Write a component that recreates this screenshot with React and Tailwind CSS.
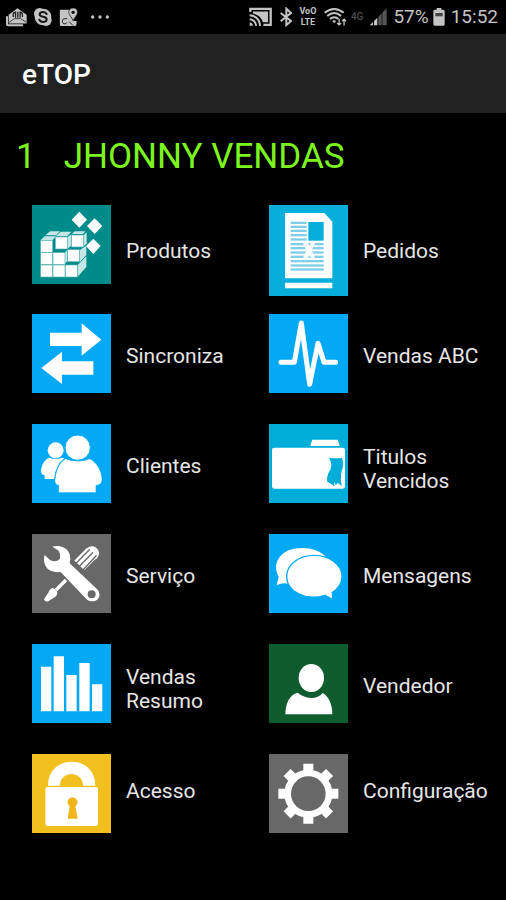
import React from "react";

function Tile({ color, children }) {
  return (
    <svg viewBox="0 0 237 237" className={"block size-[79px] shrink-0 " + color} fill="#fff" aria-hidden="true">
      {children}
    </svg>
  );
}

function ProductsIcon() {
  const faces = [
    [26, 106], [26, 143], [26, 180], [63, 143], [63, 180], [100, 180],
    [70, 96], [107, 134], [119, 90],
  ];
  return (
    <Tile color="bg-[#008b8b]">
      <path d="M142 20l23 24-23 24-23-24zM188 40l23 23-23 24-23-24zM184 101l22 22-22 24-22-24z" />
      <g fill="#c5e7e8">
        <path d="M26 105L38 94H72L62 105zM40 91L54 79H84L72 91zM71 94L86 80H118L106 94zM120 87L128 79H160L153 87z" />
        <path d="M106 97L118 88V122L106 131zM98 144L106 134V168L98 178zM155 91L164 82V116L155 124zM144 135L163 122V150L144 170zM137 180L163 154V186L137 215z" />
      </g>
      {faces.map(([x, y]) => (
        <rect key={x + "-" + y} x={x} y={y} width="36" height="36" stroke="#5cb4b4" strokeWidth="2" />
      ))}
    </Tile>
  );
}

function OrdersIcon() {
  const rows = [50, 62, 74, 87, 100, 114, 126, 139, 152, 165, 178, 190];
  return (
    <svg viewBox="0 0 237 273" className="block h-[91px] w-[79px] shrink-0 bg-[#08aedb]" fill="#fff" aria-hidden="true">
      <path d="M48 24H166L190 50V220H48zM48 233H190V250H48z" />
      {rows.map((y, i) => (
        <rect key={y} x="65" y={y} width={i < 5 ? 48 : 99} height="7" fill="#7fd0e6" />
      ))}
      <rect x="118" y="51" width="46" height="56" fill="#08aedb" />
      <path d="M101 112H116L121 124 127 112H139L128 136 139 162H127L121 149 115 162H101L112 136z" />
    </svg>
  );
}

function SyncIcon() {
  return (
    <Tile color="bg-[#03a9f4]">
      <path d="M54 56H149V28L208 77 149 125V96H54zM28 162L90 113V142H184V182H90V210z" />
    </Tile>
  );
}

function PulseIcon() {
  return (
    <Tile color="bg-[#03a9f4]">
      <path d="M36 145H76L97 27 122 211 147 88 165 145H200" fill="none" stroke="#fff" strokeWidth="15" strokeLinecap="round" strokeLinejoin="round" />
    </Tile>
  );
}

function ClientsIcon() {
  return (
    <Tile color="bg-[#03a9f4]">
      <circle cx="71" cy="79" r="24" />
      <path d="M51 101Q71 108 90 101L97 103Q72 120 66 165H38V154C26 150 26 143 28 132 32 116 40 106 51 101z" />
      <path d="M100 104Q118 111 137 111T174 104C196 116 208 140 210 162 211 178 205 183 192 184V206H80V184C68 182 67 172 70 158 74 132 84 114 100 104z" stroke="#03a9f4" strokeWidth="2" />
      <circle cx="137" cy="71" r="38" stroke="#03a9f4" strokeWidth="3" />
    </Tile>
  );
}

function FolderIcon() {
  return (
    <Tile color="bg-[#00acd8]">
      <path d="M130 47H206Q210 56 212 66H124Q126 56 130 47z" />
      <rect x="9" y="71" width="219" height="123" rx="7" />
      <path d="M180 101Q198 104 218 102 224 110 222 127 218 140 216 152 214 168 218 187L206 176 201 184 194 172 197 187Q185 178 175 174 172 162 178 148 187 136 187 123 186 110 180 101z" fill="#00acd8" />
    </Tile>
  );
}

function ServiceIcon() {
  return (
    <Tile color="bg-[#686868]">
      <path d="M142 94L180 56" stroke="#fff" strokeWidth="42" />
      <circle cx="180" cy="58" r="21" />
      <path d="M133 87L172 47M142 97L182 56M153 108L192 66" fill="none" stroke="#686868" strokeWidth="4" strokeLinecap="round" />
      <path d="M102 138L72 168" stroke="#fff" strokeWidth="10" />
      <path d="M62 162Q70 164 76 174 76 187 64 192L49 202Q39 205 36 196L49 176Q54 164 62 162z" />
      <path d="M61 38C79 33 106 39 113 61Q117 76 113 88L197 167C214 191 188 212 165 197L86 114C66 116 39 112 36 79Q35 70 38 63L54 78Q71 87 84 74 86 57 78 49z" />
      <circle cx="179" cy="181" r="12" fill="#686868" />
    </Tile>
  );
}

function MessagesIcon() {
  return (
    <Tile color="bg-[#03a9f4]">
      <path d="M23 154L29 128C12 100 22 65 59 49 100 34 151 43 172 70L60 150Q42 144 23 154z" />
      <path d="M135 64C181 64 219 92 219 127 219 147 208 164 190 176L191 197 168 184C110 202 53 174 53 127 53 92 90 64 135 64z" stroke="#03a9f4" strokeWidth="4" />
    </Tile>
  );
}

function BarsIcon() {
  return (
    <Tile color="bg-[#03a9f4]">
      <path d="M27 68H58V202H27zM65 37H96V202H65zM103 93H134V202H103zM142 57H173V202H142zM180 121H211V202H180z" />
    </Tile>
  );
}

function SellerIcon() {
  return (
    <Tile color="bg-[#0f5c2e]">
      <ellipse cx="127" cy="102" rx="38" ry="42" />
      <path d="M49 211C50 176 62 152 86 146Q103 161 131 162 150 160 161 147C180 158 190 182 190 211z" />
    </Tile>
  );
}

function LockIcon() {
  return (
    <Tile color="bg-[#f1c01e]">
      <path d="M48 95V92C50 0 188 0 190 92V95H153C153 48 84 48 84 95z" />
      <rect x="40" y="99" width="158" height="117" rx="7" />
      <path d="M113 157A15 15 0 1 1 130 157L137 194H107z" fill="#efb51a" />
    </Tile>
  );
}

function GearIcon() {
  const angles = [0, 45, 90, 135];
  return (
    <Tile color="bg-[#686868]">
      <circle cx="118" cy="119" r="62" fill="none" stroke="#fff" strokeWidth="20" />
      {angles.map((a) => (
        <path key={a} d="M103 29H133V54H103zM103 184H133V209H103z" transform={`rotate(${a} 118 119)`} />
      ))}
    </Tile>
  );
}

const entries = [
  { label: "Produtos", Icon: ProductsIcon, pad: "pt-[34px]" },
  { label: "Pedidos", Icon: OrdersIcon, pad: "pt-[34px]" },
  { label: "Sincroniza", Icon: SyncIcon, pad: "pt-[30px]" },
  { label: "Vendas ABC", Icon: PulseIcon, pad: "pt-[30px]" },
  { label: "Clientes", Icon: ClientsIcon, pad: "pt-[30px]" },
  { label: "Titulos Vencidos", Icon: FolderIcon, pad: "pt-[21px]" },
  { label: "Serviço", Icon: ServiceIcon, pad: "pt-[30px]" },
  { label: "Mensagens", Icon: MessagesIcon, pad: "pt-[30px]" },
  { label: "Vendas Resumo", Icon: BarsIcon, pad: "pt-[21px]" },
  { label: "Vendedor", Icon: SellerIcon, pad: "pt-[30px]" },
  { label: "Acesso", Icon: LockIcon, pad: "pt-[25px]" },
  { label: "Configuração", Icon: GearIcon, pad: "pt-[25px]" },
];

function StatusBar() {
  return (
    <div className="flex h-[34px] items-center justify-between pr-2 pl-[6px] text-[#c4c4c4]">
      <div className="flex items-center gap-[6px]">
        <svg viewBox="0 0 64 60" className="h-5 w-[21px]" fill="currentColor" aria-hidden="true">
          <path d="M0 28H6V52H52V58H6Q0 58 0 52z" />
          <path d="M8 23L35 3 63 23V50H8z" />
          <path d="M22 30V22Q22 15 29 15V32M36 14V32M43 32V15Q50 15 50 22V30" stroke="#222" strokeWidth="4" fill="none" />
          <path d="M9 46L26 35H45L62 46" stroke="#444" strokeWidth="3" fill="none" />
        </svg>
        <svg viewBox="0 0 60 60" className="size-5" fill="currentColor" aria-hidden="true">
          <circle cx="20" cy="20" r="17" />
          <circle cx="39" cy="40" r="17" />
          <circle cx="30" cy="30" r="25" />
          <path d="M41 21C36 11 19 14 20 23 21 32 41 27 41 37 41 47 23 48 19 38" fill="none" stroke="#151515" strokeWidth="6" strokeLinecap="round" />
        </svg>
        <svg viewBox="0 0 56 60" className="h-5 w-[19px]" fill="currentColor" aria-hidden="true">
          <path d="M4 8H30L36 32 46 42H52V52Q52 57 47 57H5Q2 57 2 52V12Q2 8 4 8z" />
          <path d="M42 3C33 3 28 9 29 17 30 26 39 31 42 42 45 31 54 26 55 17 56 9 51 3 42 3z" stroke="#111" strokeWidth="2" />
          <circle cx="42" cy="16" r="5" fill="#111" />
          <path d="M24 35H18A7 8 0 1 0 23 46" fill="none" stroke="#222" strokeWidth="3" />
          <path d="M30 44L42 56" stroke="#222" strokeWidth="3" />
        </svg>
        <svg viewBox="0 0 60 60" className="ml-[6px] size-5" fill="currentColor" aria-hidden="true">
          <circle cx="8" cy="30" r="5" />
          <circle cx="30" cy="30" r="5" />
          <circle cx="52" cy="30" r="5" />
        </svg>
      </div>
      <div className="flex items-center">
        <svg viewBox="0 0 70 60" className="mr-2 h-5 w-[23px]" fill="currentColor" aria-hidden="true">
          <path d="M4 15V5H66V54H44" fill="none" stroke="currentColor" strokeWidth="7" />
          <path d="M12 13H58V46H42C38 31 27 22 12 19z" />
          <path d="M2 25Q31 27 34 57M2 37Q20 39 22 57" fill="none" stroke="currentColor" strokeWidth="6" />
          <path d="M2 46Q12 48 12 57H2z" />
        </svg>
        <svg viewBox="0 0 36 60" className="mr-[6px] h-5 w-3" fill="none" stroke="currentColor" strokeWidth="6" aria-hidden="true">
          <path d="M2 18L33 42 19 54V5L33 18 2 43" />
        </svg>
        <span className="mr-[6px] flex w-5 flex-col items-center text-[9px] leading-[11px] font-bold">
          <span>VoO</span>
          <span>LTE</span>
        </span>
        <svg viewBox="0 0 70 60" className="mr-1 h-5 w-[23px]" fill="none" stroke="currentColor" strokeWidth="6" aria-hidden="true">
          <path d="M2 17Q31-6 60 17M10 27Q31 9 52 27M18 36Q31 25 44 36" />
          <path d="M25 42Q31 38 37 42L31 49z" fill="currentColor" stroke="none" />
          <path d="M46 36V54M40 48L46 54 52 48M61 56V37M55 43L61 37 67 43" strokeWidth="4" />
        </svg>
        <span className="mr-[6px] self-start pt-[6px] text-[10px] leading-3 font-medium text-[#505050]">4G</span>
        <svg viewBox="0 0 54 54" className="mr-[6px] size-[18px]" aria-hidden="true">
          <path d="M2 52L12 42V52zM15 39L25 29V52H15z" fill="#c4c4c4" />
          <path d="M28 26L38 16V52H28zM40 14L53 1V52H40z" fill="#555" />
        </svg>
        <span className="mr-1 text-[19px] leading-6">57%</span>
        <svg viewBox="0 0 36 54" className="mr-[6px] h-[18px] w-3" fill="currentColor" aria-hidden="true">
          <path d="M11 0H25V5H31Q35 5 35 10V49Q35 53 31 53H5Q1 53 1 49V10Q1 5 5 5H11z" />
          <path d="M7 15H29V25H7z" fill="#454545" />
        </svg>
        <span className="text-[19px] leading-6">15:52</span>
      </div>
    </div>
  );
}

export default function App() {
  return (
    <div className="min-h-screen bg-black font-[Roboto,sans-serif]">
      <StatusBar />
      <header className="flex h-[79px] items-center bg-[#212121] px-[22px] pt-[2px]">
        <h1 className="text-[28px] leading-8 font-medium text-white">eTOP</h1>
      </header>
      <main>
        <h2 className="flex gap-7 px-4 pt-6 pb-7 text-[35px] leading-10 text-[#7cf51e]">
          <span>1</span>
          <span>JHONNY VENDAS</span>
        </h2>
        <ul className="grid grid-cols-2 grid-rows-[109px_repeat(5,110px)] pl-8">
          {entries.map(({ label, Icon, pad }) => (
            <li key={label}>
              <button type="button" className="flex w-full items-start gap-[15px] text-left">
                <Icon />
                <span className={"max-w-[126px] text-[21px] leading-6 text-[#e6e6e6] " + pad}>{label}</span>
              </button>
            </li>
          ))}
        </ul>
      </main>
    </div>
  );
}
